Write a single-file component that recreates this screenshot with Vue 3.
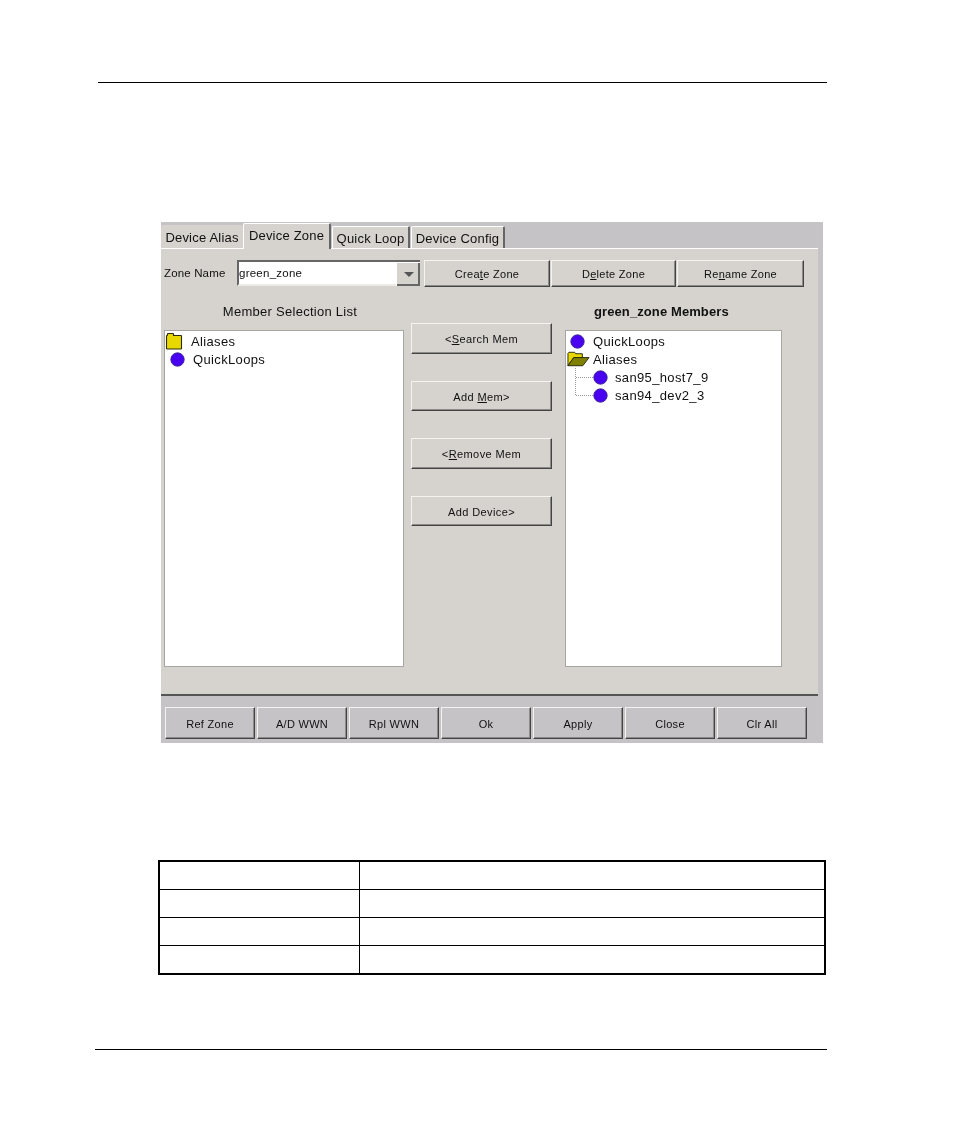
<template>
  <div class="page">
    <div class="rule top-rule"></div>

    <div class="shot">
      <div class="tabs">
        <div class="tab first">Device Alias</div>
        <div class="tab active">Device Zone</div>
        <div class="tab third">Quick Loop</div>
        <div class="tab fourth">Device Config</div>
      </div>

      <div class="body">
        <div class="zone-row">
          <span class="zone-label">Zone Name</span>
          <div class="combo">
            <span class="combo-value">green_zone</span>
            <span class="combo-arrow"><i></i></span>
          </div>
          <button class="btn zone-btn create">Crea<u>t</u>e Zone</button>
          <button class="btn zone-btn delete">D<u>e</u>lete Zone</button>
          <button class="btn zone-btn rename">Re<u>n</u>ame Zone</button>
        </div>

        <div class="columns">
          <div class="col left-col">
            <div class="col-title">Member Selection List</div>
            <div class="list">
              <div class="row">
                <svg class="ico closed-folder" width="18" height="17" viewBox="0 0 18 17">
                  <path d="M1.5 15.5V3L2.5 2V1L3 0.5H8L8.5 1V2.5H16L16.5 3V15.5L16 16H2Z" fill="#e6d800" stroke="#2a2a10" stroke-width="1.1" />
                </svg>
                <span>Aliases</span>
              </div>
              <div class="row">
                <svg class="ico ball-left" width="15" height="15" viewBox="0 0 15 15">
                  <circle cx="7.5" cy="7.5" r="6.7" fill="#4a00f0" stroke="#3a2a90" stroke-width="0.9" />
                </svg>
                <span>QuickLoops</span>
              </div>
            </div>
          </div>

          <div class="actions">
            <button class="btn action">&lt;<u>S</u>earch Mem</button>
            <button class="btn action">Add <u>M</u>em&gt;</button>
            <button class="btn action">&lt;<u>R</u>emove Mem</button>
            <button class="btn action">Add Device&gt;</button>
          </div>

          <div class="col right-col">
            <div class="col-title bold">green_zone Members</div>
            <div class="list">
              <div class="row">
                <svg class="ico ball-right" width="15" height="15" viewBox="0 0 15 15">
                  <circle cx="7.5" cy="7.5" r="6.7" fill="#4a00f0" stroke="#3a2a90" stroke-width="0.9" />
                </svg>
                <span>QuickLoops</span>
              </div>
              <div class="row">
                <svg class="ico open-folder" width="23" height="16" viewBox="0 0 24 16">
                  <path d="M1 15V2L2 1H8L9 2.5H16V6.5H7L1 15Z" fill="#e6d800" stroke="#2a2a10" />
                  <path d="M1 15L7 6.5H23L16.5 15Z" fill="#808000" stroke="#2a2a10" />
                </svg>
                <span>Aliases</span>
              </div>
              <div class="children">
                <div v-for="host in hosts" :key="host" class="row child">
                  <span class="branch"></span>
                  <svg class="ico" width="15" height="15" viewBox="0 0 15 15">
                    <circle cx="7.5" cy="7.5" r="6.7" fill="#4a00f0" stroke="#3a2a90" stroke-width="0.9" />
                  </svg>
                  <span>{{ host }}</span>
                </div>
              </div>
            </div>
          </div>
        </div>
      </div>

      <div class="bottom-bar">
        <button v-for="label in bottomButtons" :key="label" class="btn bottom-btn">{{ label }}</button>
      </div>
    </div>

    <div class="blank-table">
      <template v-for="n in 4" :key="n">
        <div class="cell name"></div>
        <div class="cell desc"></div>
      </template>
    </div>

    <div class="rule bottom-rule"></div>
  </div>
</template>

<script setup>
const hosts = ['san95_host7_9', 'san94_dev2_3']
const bottomButtons = ['Ref Zone', 'A/D WWN', 'Rpl WWN', 'Ok', 'Apply', 'Close', 'Clr All']
</script>

<style>
html, body {
  background: #fff;
}
</style>

<style scoped>
.page {
  width: 954px;
  height: 1145px;
  overflow: hidden;
  background: #fff;
  font-family: "Liberation Sans", Arial, sans-serif;
  color: #111;
}

.rule {
  height: 1px;
  background: #000;
}

.top-rule {
  margin: 82px 0 0 98px;
  width: 729px;
}

.shot {
  margin: 139px 0 0 161px;
  width: 662px;
  height: 521px;
  background: #c6c3c6;
  display: flex;
  flex-direction: column;
  filter: blur(0.4px);
}

.tabs {
  height: 26px;
  display: flex;
  align-items: flex-end;
}

.tab {
  box-sizing: border-box;
  height: 22px;
  padding-top: 4px;
  background: #d6d3ce;
  border-top: 1px solid #fff;
  border-left: 1px solid #fff;
  border-right: 2px solid #666;
  border-radius: 2px 2px 0 0;
  font-size: 13px;
  line-height: 16px;
  text-align: center;
  letter-spacing: 0.2px;
}

.tab.first {
  width: 82px;
  height: 23px;
  padding-top: 5px;
  border-top: 0;
  border-left: 0;
  border-right: 0;
}

.tab.active {
  position: relative;
  z-index: 1;
  width: 88px;
  height: 26px;
  margin-bottom: -1px;
  padding-top: 4px;
}

.tab.third {
  width: 78px;
  margin-left: 1px;
}

.tab.fourth {
  width: 94px;
  margin-left: 1px;
}

.body {
  box-sizing: border-box;
  width: 657px;
  height: 448px;
  background: #d6d3ce;
  border-top: 1px solid #fff;
  border-bottom: 2px solid #555;
}

.zone-row {
  display: flex;
  align-items: flex-start;
  margin-top: 11px;
  padding-left: 3px;
}

.zone-label {
  width: 73px;
  font-size: 11.5px;
  line-height: 26px;
  letter-spacing: 0.15px;
}

.combo {
  box-sizing: border-box;
  width: 183px;
  height: 26px;
  display: flex;
  align-items: stretch;
  background: #fff;
  border: 2px solid #666;
  border-right: 0;
  border-bottom-color: #ecebe8;
}

.combo-value {
  flex: 1;
  font-size: 11.5px;
  line-height: 22px;
  letter-spacing: 0.25px;
}

.combo-arrow {
  width: 23px;
  margin-bottom: -2px;
  display: flex;
  align-items: center;
  justify-content: center;
  background: #d6d3ce;
  border-left: 1px solid #fff;
  border-top: 1px solid #fff;
  box-shadow: inset -2px -2px #666;
}

.combo-arrow i {
  width: 0;
  height: 0;
  border-left: 5px solid transparent;
  border-right: 5px solid transparent;
  border-top: 5px solid #555;
}

.btn {
  box-sizing: border-box;
  padding: 0;
  background: #d6d3ce;
  border: 1px solid;
  border-color: #f4f3f0 #444 #444 #f4f3f0;
  box-shadow: inset -1px -1px #8c8a86;
  font-family: inherit;
  font-size: 11px;
  letter-spacing: 0.4px;
  color: #111;
}

.zone-btn {
  height: 27px;
  letter-spacing: 0.3px;
}

.create {
  width: 126px;
  margin-left: 4px;
}

.delete {
  width: 125px;
  margin-left: 1px;
}

.rename {
  width: 127px;
  margin-left: 1px;
}

.columns {
  display: flex;
  margin-top: 9px;
}

.col-title {
  height: 34px;
  font-size: 13px;
  line-height: 32px;
  text-align: center;
  letter-spacing: 0.27px;
}

.col-title.bold {
  font-weight: bold;
  letter-spacing: 0.1px;
  text-align: left;
  padding-left: 29px;
}

.left-col {
  width: 240px;
  margin-left: 3px;
}

.left-col .col-title {
  padding-left: 12px;
}

.right-col {
  width: 217px;
  margin-left: 13px;
}

.list {
  box-sizing: border-box;
  height: 337px;
  padding-top: 1px;
  background: #fff;
  border: 1px solid #a8a6a2;
}

.row {
  height: 18px;
  display: flex;
  align-items: center;
  font-size: 13px;
  letter-spacing: 0.35px;
  white-space: nowrap;
}

.ico {
  flex: none;
}

.closed-folder {
  margin: 0 8px 0 0;
}

.ball-left {
  margin: 0 8px 0 5px;
}

.ball-right {
  margin: 0 8px 0 4px;
}

.open-folder {
  margin: 0 3px 0 1px;
}

.children {
  box-sizing: border-box;
  width: 180px;
  height: 27px;
  margin-left: 9px;
  border-left: 1px dotted #999;
}

.branch {
  width: 17px;
  flex: none;
  border-top: 1px dotted #999;
}

.child .ico {
  margin-right: 7px;
}

.actions {
  width: 141px;
  margin: 0 0 0 7px;
  padding-top: 27px;
  display: flex;
  flex-direction: column;
  gap: 27px;
}

.action {
  height: 30.6px;
  padding-top: 2px;
}

.bottom-bar {
  display: flex;
  gap: 2px;
  padding: 11px 0 0 4px;
}

.bottom-btn {
  width: 90px;
  height: 32px;
  padding-top: 2px;
  background: #c6c3c6;
  letter-spacing: 0.3px;
}

.blank-table {
  box-sizing: border-box;
  margin: 117px 0 0 158px;
  width: 668px;
  height: 115px;
  display: grid;
  grid-template-columns: 200px 1fr;
  grid-template-rows: 28px 28px 28px 27px;
  border: 2px solid #000;
}

.cell {
  border-bottom: 1px solid #000;
}

.cell.name {
  border-right: 1px solid #000;
}

.cell:nth-last-child(-n+2) {
  border-bottom: 0;
}

.bottom-rule {
  margin: 74px 0 0 95px;
  width: 732px;
}
</style>
